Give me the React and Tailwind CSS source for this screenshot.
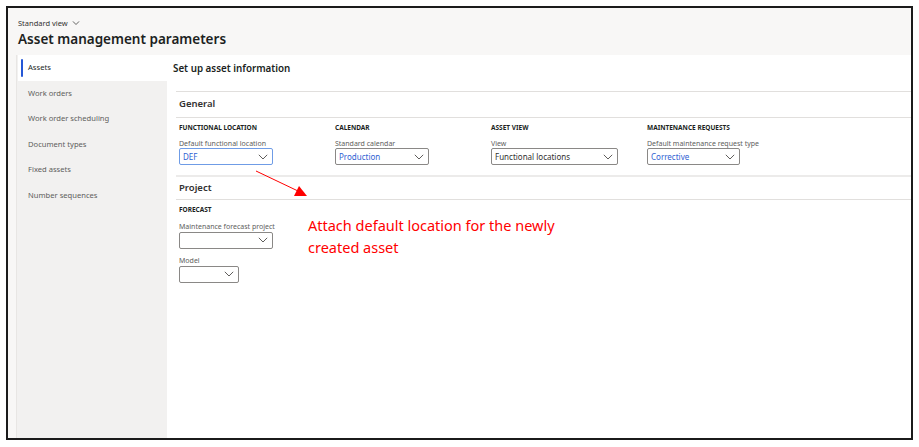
import React from 'react';

const NAV = ['Assets', 'Work orders', 'Work order scheduling', 'Document types', 'Fixed assets', 'Number sequences'];

const Chevron = ({ className = '' }) => (
    <svg width="10" height="6" viewBox="0 0 10 6" className={className}>
        <path d="M0.8 0.8 L5 5 L9.2 0.8" fill="none" stroke="currentColor" strokeWidth="1" />
    </svg>
);

const Select = ({ value, width, focused, blue }) => (
    <div
        className={`flex items-center justify-between h-[17px] rounded-[2px] border px-[3px] ${width} ${focused ? 'border-[#6f9ce6]' : 'border-[#8a8886]'}`}
    >
        <span className={`text-[8px] ${blue ? 'text-[#2f62d3]' : 'text-[#323130]'}`}>{value}</span>
        <Chevron className="text-[#605e5c] mr-[1px]" />
    </div>
);

const Field = ({ heading, label, value, width, focused, blue }) => (
    <div className="w-[156px]">
        <div className="text-[6.5px] font-bold text-[#201f1e] h-[10px] leading-[10px]">{heading}</div>
        <div className="text-[7px] text-[#605e5c] mt-[5.5px] leading-[9px]">{label}</div>
        <div className="mt-[0.5px]">
            <Select value={value} width={width} focused={focused} blue={blue} />
        </div>
    </div>
);

export default function App() {
    return (
        <div className="w-[919px] h-[447px] bg-white pt-[6px] pl-[6px] pr-[6px] pb-[7px]" style={{ fontFamily: '"Noto Sans", "Open Sans", sans-serif' }}>
            <div className="relative w-full h-full border-2 border-[#1b1b1b] flex flex-col overflow-hidden">
                {/* Header */}
                <div className="h-[47px] shrink-0 bg-[#f8f7f6] pl-[10px] pt-[9px]">
                    <div className="flex items-center gap-[3px] text-[7.5px] text-[#323130] leading-[12px]">
                        Standard view <Chevron className="text-[#323130] scale-75" />
                    </div>
                    <div className="text-[13.5px] font-semibold text-[#201f1e] leading-[20px]">Asset management parameters</div>
                </div>

                {/* Body */}
                <div className="flex flex-1">
                    <div className="w-[9px] bg-[#f8f7f6] border-r border-[#e8e6e4]" />
                    <div className="w-[150px] bg-[#f2f1f0] pl-[1px]">
                        {NAV.map((n, i) => (
                            <div
                                key={n}
                                className={`relative h-[25.5px] flex items-center pl-[10px] text-[7.6px] ${i === 0 ? 'bg-white text-[#201f1e]' : 'text-[#605e5c]'}`}
                            >
                                {i === 0 && <div className="absolute left-[3px] top-[4px] bottom-[4px] w-[2px] rounded-full bg-[#2557d6]" />}
                                {n}
                            </div>
                        ))}
                    </div>

                    <div className="flex-1 bg-white">
                        <div className="h-[36px] pl-[6px] pt-[8px] text-[9.8px] leading-[12px] font-semibold text-[#201f1e]">
                            Set up asset information
                        </div>
                        <div className="ml-[9px] border-t border-[#e1dfdd]">
                            <div className="h-[25px] pl-[3px] flex items-center text-[9.5px] font-semibold text-[#323130]">General</div>
                            <div className="border-t border-[#e1dfdd] pl-[3px] pt-[5px] pb-[10px] flex">
                                <Field heading="FUNCTIONAL LOCATION" label="Default functional location" value="DEF" width="w-[94px]" focused blue />
                                <Field heading="CALENDAR" label="Standard calendar" value="Production" width="w-[94px]" blue />
                                <Field heading="ASSET VIEW" label="View" value="Functional locations" width="w-[127px]" />
                                <Field heading="MAINTENANCE REQUESTS" label="Default maintenance request type" value="Corrective" width="w-[93px]" blue />
                            </div>
                            <div className="border-t-2 border-[#ecebea] h-[24px] pl-[3px] flex items-center text-[9.5px] font-semibold text-[#323130]">Project</div>
                            <div className="border-t border-[#e1dfdd] pl-[3px] pt-[5px]">
                                <div className="text-[6.5px] font-bold text-[#201f1e] leading-[10px]">FORECAST</div>
                                <div className="text-[7px] text-[#605e5c] mt-[6.5px] leading-[9px]">Maintenance forecast project</div>
                                <div className="mt-[1px]"><Select value="" width="w-[94px]" /></div>
                                <div className="text-[7px] text-[#605e5c] mt-[7px] leading-[9px]">Model</div>
                                <div className="mt-[1px]"><Select value="" width="w-[60px]" /></div>
                            </div>
                        </div>
                    </div>
                </div>

                {/* Annotation */}
                <svg className="absolute left-0 top-0 pointer-events-none" width="905" height="432">
                    <line x1="248" y1="163" x2="290" y2="183" stroke="#ff0000" strokeWidth="1" />
                    <polygon points="299,188 286,188 291,178" fill="#ff0000" />
                </svg>
                <div className="absolute left-[300px] top-[206px] text-[14.5px] leading-[22px] text-[#ff0000]">
                    <div>Attach default location for the newly</div>
                    <div>created asset</div>
                </div>
            </div>
        </div>
    );
}
